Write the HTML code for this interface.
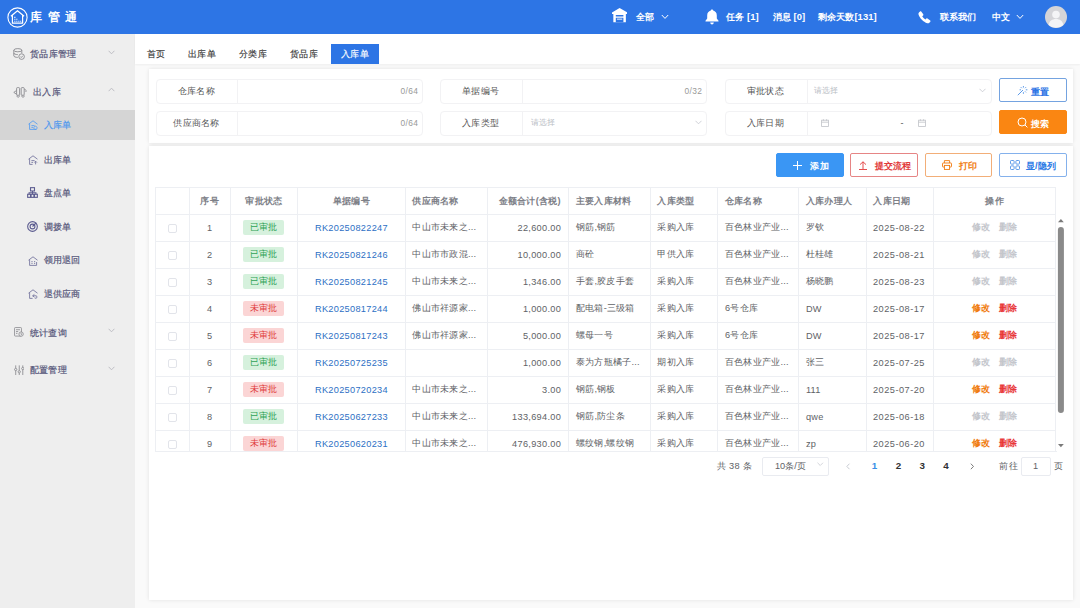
<!DOCTYPE html>
<html lang="zh">
<head>
<meta charset="utf-8">
<title>库管通</title>
<style>
*{box-sizing:border-box;margin:0;padding:0}
html,body{width:1080px;height:608px;overflow:hidden}
body{font-family:"Liberation Sans",sans-serif;font-size:9.2px;letter-spacing:.26px;color:#606266;background:#fafafa;position:relative}
.abs{position:absolute}
#hdr{position:absolute;left:0;top:0;width:1080px;height:34px;background:#2d75e5;color:#fff}
#hdr .t{position:absolute;top:0;height:34px;line-height:34px;font-size:9.4px;letter-spacing:.1px;font-weight:bold;white-space:nowrap}
#brand{position:absolute;left:30.300px;top:-.5px;height:34px;line-height:34px;font-size:12px;letter-spacing:5.400px;font-weight:bold;white-space:nowrap}
#side{position:absolute;left:0;top:34px;width:135px;height:574px;background:#eeeeee}
.mi{position:absolute;left:0;width:135px;height:30px;line-height:30px;color:#56567a;font-size:9.2px;white-space:nowrap}
.mi.act{background:#d5d5d5;color:#4f98ee}
.mi span{position:absolute;top:0;-webkit-text-stroke:.2px currentColor}
.mi svg{position:absolute}
#tabs{position:absolute;left:135px;top:34px;width:945px;height:29.500px;background:#fff;box-shadow:0 1px 2px rgba(0,0,0,.05)}
.tab{position:absolute;top:10px;height:20px;line-height:20px;font-size:9.3px;color:#3a3a3a;-webkit-text-stroke:.15px currentColor;white-space:nowrap}
.tab.on{background:#2d75e5;color:#fff;text-align:center}
.panel{position:absolute;background:#fff;box-shadow:0 0 4px rgba(0,0,0,.10)}
.fg{position:absolute;height:25px;border:1px solid #f2f2f4;border-radius:4px;background:#fff}
.fg .lb{position:absolute;left:0;top:0;height:23px;line-height:23px;text-align:center;padding-right:1.2px;color:#555;font-size:9.3px;border-right:1px solid #f2f2f4}
.fg .cnt{position:absolute;right:4.2px;top:0;line-height:23.6px;font-size:8.4px;letter-spacing:.35px;color:#999}
.fg .ph{position:absolute;top:0;line-height:22px;font-size:7.6px;color:#b8bcc4}
.btn{position:absolute;width:67.5px;height:24px;line-height:22px;border-radius:2px;border:1px solid;font-size:9.2px;font-weight:bold;white-space:nowrap}
.btn span{position:absolute;top:1.5px}
.btn svg{position:absolute}
.btn.tb span{top:.8px}
table{border-collapse:collapse;table-layout:fixed;width:900.500px;font-size:9.2px}
td,th{height:27px;border:1px solid #edeff3;padding:0 0 0 6.7px;text-align:left;white-space:nowrap;overflow:hidden;font-weight:normal;color:#606266}
th{color:#7d8087;font-weight:bold;font-size:9.2px}
td{padding-bottom:0 !important}
th{padding-top:2px !important}
td.r,td.lk{letter-spacing:.3px}
td.d{letter-spacing:.5px;padding-left:6.3px}
.c{text-align:center;padding:0}
.r{text-align:right;padding:0 7.4px 0 0}
td.r{padding-right:7.1px}
.lk{color:#2d6fc4}
.tg{position:relative;left:-.4px;display:inline-block;height:15px;line-height:15px;padding:0 6.5px;border-radius:2px;font-size:9.2px}
.tg.g{background:#d6f1dd;color:#2fa256}
.tg.rd{background:#fbd5d5;color:#e03c3c}
.cb{display:inline-block;width:9px;height:9px;border:1px solid #e2e4ea;border-radius:2px;background:#fff;vertical-align:middle}
.op b{font-weight:bold;margin:0 4.3px}
.op.off b{color:#c4c6cc}
.op.on b:first-child{color:#f07c10}
.op.on b:last-child{color:#e8383a}
.pg{position:absolute;top:455px;height:22px;line-height:22px;font-size:9.2px;color:#606266;white-space:nowrap}
</style>
</head>
<body>
<div id="hdr">
  <svg class="abs" style="left:6.500px;top:6.500px" width="21" height="21" viewBox="0 0 21 21" fill="none" stroke="#fff">
    <circle cx="10.5" cy="10.5" r="9.600" stroke-width="1.1"/>
    <path d="M3.900 9.200 L10.500 3.700 L17.100 9.200 M5.400 8.300 V16.200 H15.600 V8.300" stroke-width="1.2" stroke-linejoin="round"/>
    <path d="M7.300 10.400h1.100M7.300 12.300h1.100M7.300 14.200h1.100M9.300 12.300h1.100M9.300 14.200h1.100M11.300 14.200h1.100M13.200 14.200h1" stroke-width="1.100"/>
  </svg>
  <div id="brand">库管通</div>
  <svg class="abs" style="left:612px;top:8.400px" width="15.200" height="14.300" viewBox="0 0 16 15"><path d="M8 0 L16 4.6 V6.2 H14.6 V15 H1.4 V6.2 H0 V4.6 Z" fill="#fff"/><path d="M4 7.4h8v1.6H4z M4 10.2h8v4.8H4z" fill="#2d75e5"/><path d="M5.2 11.2h5.6v1H5.2z" fill="#fff"/></svg>
  <div class="t" style="left:636px">全部</div>
  <svg class="abs" style="left:661px;top:14px" width="8" height="6" viewBox="0 0 8 6" fill="none" stroke="#fff" stroke-width="1"><path d="M0.8 1 L4 4.4 L7.2 1"/></svg>
  <svg class="abs" style="left:705px;top:9px" width="14" height="16" viewBox="0 0 14 16" fill="#fff"><path d="M7 0.5c.7 0 1.2.5 1.2 1.1 2.2.6 3.6 2.4 3.6 4.8v3.2l1.7 2.2v.8H.5v-.8l1.7-2.2V6.400c0-2.4 1.400-4.200 3.600-4.800C5.800 1 6.300.5 7 .5z"/><path d="M5.200 13.600h3.600c0 1-.8 1.800-1.800 1.800s-1.800-.8-1.800-1.800z"/></svg>
  <div class="t" style="left:726px">任务 [1]</div>
  <div class="t" style="left:772.5px">消息 [0]</div>
  <div class="t" style="left:818px">剩余天数[131]</div>
  <svg class="abs" style="left:918.300px;top:11px" width="13" height="12.500" viewBox="0 0 14 14" fill="#fff"><path d="M3.300.6 5.600 3.700c.3.400.2.900-.1 1.200L4.400 6c.8 1.500 2 2.700 3.600 3.600l1.100-1.100c.3-.3.800-.4 1.200-.1l3.100 2.300c.4.300.5.900.1 1.300l-1.100 1.200c-.6.600-1.500.8-2.300.5C5.700 12.200 1.800 8.300.3 3.900 0 3.100.2 2.200.8 1.600L2 .5c.4-.4 1-.3 1.300.1z"/></svg>
  <div class="t" style="left:940px">联系我们</div>
  <div class="t" style="left:991.5px">中文</div>
  <svg class="abs" style="left:1016px;top:14px" width="8" height="6" viewBox="0 0 8 6" fill="none" stroke="#fff" stroke-width="1"><path d="M0.8 1 L4 4.400 L7.200 1"/></svg>
  <svg class="abs" style="left:1044.500px;top:5.700px" width="22" height="22" viewBox="0 0 22 22"><circle cx="11" cy="11" r="11" fill="#d4d4d8"/><circle cx="11" cy="8.600" r="3.800" fill="#f4f4f6"/><path d="M3.600 19c.6-4 3.600-6 7.400-6s6.800 2 7.400 6a11 11 0 0 1-14.800 0z" fill="#f4f4f6"/></svg>
</div>

<div id="side">
  <div class="mi" style="top:5px"><svg style="left:13px;top:9px" width="12" height="12" viewBox="0 0 12 12" fill="none" stroke="#8a8a8f" stroke-width=".9"><ellipse cx="4.800" cy="2.200" rx="4" ry="1.600"/><path d="M.8 2.200v5.600c0 .9 1.800 1.600 4 1.600M.8 5c0 .9 1.800 1.600 4 1.600M8.800 2.200v3"/><circle cx="8.600" cy="8.600" r="2.800"/><path d="M7.400 8.600l.9.900 1.500-1.700"/></svg><span style="left:30px">货品库管理</span><svg style="left:108.300px;top:10.500px" width="7" height="5" viewBox="0 0 7 5" fill="none" stroke="#b9b9c0" stroke-width=".9"><path d="M.6.8 3.500 3.800 6.400.8"/></svg></div>
  <div class="mi" style="top:43px"><svg style="left:13px;top:10px" width="14" height="11" viewBox="0 0 14 11" fill="none" stroke="#8a8a8f" stroke-width=".9"><rect x="3.600" y=".6" width="3" height="7.600" rx=".8"/><rect x="8.200" y=".6" width="3" height="7.600" rx=".8"/><path d="M3.400 3.600.8 5.400l2.600 1.800M11.400 2.200c1.600.2 2 1.600 1.400 2.800M4.200 8.200v1.400c0 .8 2 .8 2 0V8.200M9 8.200v1.400c0 .8 2 .8 2 0V8.200"/></svg><span style="left:33px">出入库</span><svg style="left:108.300px;top:10.300px" width="7" height="5" viewBox="0 0 7 5" fill="none" stroke="#b9b9c0" stroke-width=".9"><path d="M.6 4.200 3.500 1.200 6.400 4.200"/></svg></div>
  <div class="mi act" style="top:75.500px"><svg style="left:28px;top:10.500px" width="10" height="10" viewBox="0 0 10 10" fill="none" stroke="#5a9ff0" stroke-width=".9"><path d="M.5 4.200 5 .8l4.500 3.400M1.600 3.600v5.800M1.600 9.400h7M3.400 5.600h3.200M3.400 7.400h1.600M7.400 6.200a1.600 1.600 0 1 0 .1 0z"/></svg><span style="left:43.700px">入库单</span></div>
  <div class="mi" style="top:110.600px"><svg style="left:28px;top:10.500px" width="10" height="10" viewBox="0 0 10 10" fill="none" stroke="#7878a0" stroke-width=".9"><path d="M.5 4.200 5 .8l4.500 3.400M1.600 3.600v5.800M1.600 9.400h3M3.400 5.600h3.200M3.400 7.400h1.600M7.600 9.400V6.200M6.200 7.600l1.400-1.400L9 7.600"/></svg><span style="left:43.700px">出库单</span></div>
  <div class="mi" style="top:143.700px"><svg style="left:27.200px;top:9.300px" width="11" height="11" viewBox="0 0 10 10" fill="none" stroke="#5c5c90" stroke-width="1"><rect x="3.200" y=".6" width="3.600" height="3" /><rect x=".6" y="6.600" width="2.600" height="2.800"/><rect x="3.700" y="6.600" width="2.600" height="2.800"/><rect x="6.800" y="6.600" width="2.600" height="2.800"/><path d="M5 3.600v3M1.900 6.600V5.200h6.200v1.400"/></svg><span style="left:43.700px">盘点单</span></div>
  <div class="mi" style="top:178.100px"><svg style="left:27.200px;top:9.300px" width="11" height="11" viewBox="0 0 10 10" fill="none" stroke="#5c5c90" stroke-width="1"><circle cx="5" cy="5" r="4.400"/><circle cx="5" cy="5" r="2.200"/><path d="M5 5 8.400 1.600"/></svg><span style="left:43.700px">调拨单</span></div>
  <div class="mi" style="top:211.100px"><svg style="left:28px;top:10.500px" width="10" height="10" viewBox="0 0 10 10" fill="none" stroke="#7878a0" stroke-width=".9"><path d="M.5 4.200 5 .8l4.500 3.400M1.600 3.600v5.800M1.600 9.400h7V6M3.400 5.600h1.200M3.400 7.400h1.200M6 5.600h1.200M6 7.400h1.200"/></svg><span style="left:43.700px">领用退回</span></div>
  <div class="mi" style="top:244.800px"><svg style="left:28px;top:10.500px" width="10" height="10" viewBox="0 0 10 10" fill="none" stroke="#7878a0" stroke-width=".9"><path d="M.5 4.200 5 .8l4.500 3.400M1.600 3.600v5.800h3M6.400 5.400 4.600 6.800l1.800 1.400M4.800 6.800h3.400c1 0 1 2.400 0 2.400H6.800"/></svg><span style="left:43.700px">退供应商</span></div>
  <div class="mi" style="top:283.500px"><svg style="left:14px;top:9.800px" width="10" height="10" viewBox="0 0 11 11" fill="none" stroke="#8a8a8f" stroke-width=".9"><rect x=".6" y=".6" width="7.600" height="9.400" rx=".8"/><path d="M2.200 3h4.400M2.200 5h2.400M2.200 7h1.600"/><circle cx="7.800" cy="7.800" r="2.400" fill="#eee"/><path d="M7.800 6.600v1.400l.9.600"/></svg><span style="left:29.800px">统计查询</span><svg style="left:108.300px;top:10.500px" width="7" height="5" viewBox="0 0 7 5" fill="none" stroke="#b9b9c0" stroke-width=".9"><path d="M.6.8 3.500 3.800 6.400.8"/></svg></div>
  <div class="mi" style="top:321.200px"><svg style="left:13.500px;top:9.500px" width="10.500" height="10.500" viewBox="0 0 11 11" fill="none" stroke="#8a8a8f" stroke-width=".9"><path d="M1.800.4v3M1.800 6v4.600M5.500.4v5.400M5.500 8.400v2.200M9.200.4v2M9.200 5v5.600"/><circle cx="1.800" cy="4.700" r="1.200"/><circle cx="5.500" cy="7.100" r="1.200"/><circle cx="9.200" cy="3.700" r="1.200"/></svg><span style="left:29.800px">配置管理</span><svg style="left:108.300px;top:10.500px" width="7" height="5" viewBox="0 0 7 5" fill="none" stroke="#b9b9c0" stroke-width=".9"><path d="M.6.8 3.500 3.800 6.400.8"/></svg></div>
</div>

<div id="tabs">
  <div class="tab" style="left:11.500px">首页</div>
  <div class="tab" style="left:53px">出库单</div>
  <div class="tab" style="left:104px">分类库</div>
  <div class="tab" style="left:155px">货品库</div>
  <div class="tab on" style="left:196px;width:48px">入库单</div>
</div>

<div class="panel" id="filter" style="left:148.500px;top:68.500px;width:924.300px;height:74.500px"></div>
<div class="fg" style="left:156px;top:78.500px;width:267.400px"><div class="lb" style="width:81px">仓库名称</div><div class="cnt">0/64</div></div>
<div class="fg" style="left:156px;top:110.500px;width:267.400px"><div class="lb" style="width:81px">供应商名称</div><div class="cnt">0/64</div></div>
<div class="fg" style="left:440px;top:78.500px;width:267.400px"><div class="lb" style="width:81.500px">单据编号</div><div class="cnt">0/32</div></div>
<div class="fg" style="left:440px;top:110.500px;width:267.400px"><div class="lb" style="width:81.500px">入库类型</div><div class="ph" style="left:89.500px">请选择</div><svg class="abs" style="right:4.500px;top:8.500px" width="7" height="5" viewBox="0 0 7 5" fill="none" stroke="#c4c7ce" stroke-width=".8"><path d="M.5.8 3.500 3.800 6.500.8"/></svg></div>
<div class="fg" style="left:724.500px;top:78.500px;width:267px"><div class="lb" style="width:82px">审批状态</div><div class="ph" style="left:88px">请选择</div><svg class="abs" style="right:4.500px;top:8.500px" width="7" height="5" viewBox="0 0 7 5" fill="none" stroke="#c4c7ce" stroke-width=".8"><path d="M.5.8 3.500 3.800 6.500.8"/></svg></div>
<div class="fg" style="left:724.500px;top:110.500px;width:267px"><div class="lb" style="width:82px">入库日期</div>
  <svg class="abs" style="left:95.300px;top:7.200px" width="8" height="8" viewBox="0 0 8 8" fill="none" stroke="#c0c2c8" stroke-width=".8"><rect x=".6" y="1.200" width="6.800" height="6.200"/><path d="M.6 3.200h6.800M2.400.2v1.600M5.600.2v1.600"/></svg>
  <div class="abs" style="left:175px;top:0;line-height:23px;font-size:9px;color:#555">-</div>
  <svg class="abs" style="left:192.800px;top:7.200px" width="8" height="8" viewBox="0 0 8 8" fill="none" stroke="#c0c2c8" stroke-width=".8"><rect x=".6" y="1.200" width="6.800" height="6.200"/><path d="M.6 3.200h6.800M2.400.2v1.600M5.600.2v1.600"/></svg>
</div>
<div class="btn" style="left:999.200px;top:78.300px;border-color:#74a3e0;background:#fff;color:#2d75e5">
  <svg style="left:16.500px;top:6px" width="11" height="11" viewBox="0 0 11 11" fill="none" stroke="#4a8ee6" stroke-width=".9"><path d="M.8 10.200 6 5M6.400 1v1.600M6.400 7.200v1.600M2.600 4.800h1.400M8.800 4.800h1.600M3.800 2.200l1 1M9 2.200l-1 1M9 7.400l-1-1"/></svg>
  <span style="left:31px">重置</span></div>
<div class="btn" style="left:999.200px;top:110px;border-color:#fa8612;background:#fa8612;color:#fff">
  <svg style="left:16.500px;top:5.500px" width="11" height="11" viewBox="0 0 11 11" fill="none" stroke="#fff" stroke-width="1"><circle cx="5" cy="5" r="4"/><path d="M8 8l2.400 2.400"/></svg>
  <span style="left:31px">搜索</span></div>

<div class="panel" id="main" style="left:148.500px;top:146px;width:924.300px;height:454.300px"></div>
<div class="btn tb" style="left:776.300px;top:153.100px;border-color:#3a96f4;background:#3a96f4;color:#fff">
  <svg style="left:16px;top:6.500px" width="9" height="9" viewBox="0 0 9 9" fill="none" stroke="#fff" stroke-width="1"><path d="M4.500 0v9M0 4.500h9"/></svg>
  <span style="left:33px">添加</span></div>
<div class="btn tb" style="left:850.200px;top:153.100px;border-color:#e68585;background:#fff;color:#e23a3a">
  <svg style="left:8px;top:6.500px" width="8" height="9" viewBox="0 0 8 9" fill="none" stroke="#e23a3a" stroke-width=".9"><path d="M4 8V.8M1 3.600 4 .8l3 2.800M0 8.500h8"/></svg>
  <span style="left:23.500px">提交流程</span></div>
<div class="btn tb" style="left:924.500px;top:153.100px;border-color:#f2ae78;background:#fff;color:#f07c10">
  <svg style="left:16.500px;top:6px" width="10" height="10" viewBox="0 0 10 10" fill="none" stroke="#f07c10" stroke-width=".9"><path d="M2.400 3V.6h5.200V3M2.400 7H1C.7 7 .5 6.800.5 6.500V3.500C.5 3.200.7 3 1 3h8c.3 0 .5.200.5.500v3c0 .300-.2.500-.5.500H7.600"/><rect x="2.400" y="5.400" width="5.200" height="4"/></svg>
  <span style="left:33px">打印</span></div>
<div class="btn tb" style="left:999.200px;top:153.100px;border-color:#84b1ec;background:#fff;color:#2d7be5">
  <svg style="left:9.500px;top:6px" width="10" height="10" viewBox="0 0 10 10" fill="none" stroke="#4a8ee6" stroke-width=".9"><rect x=".5" y=".5" width="3.600" height="3.600" rx=".8"/><rect x="5.900" y=".5" width="3.600" height="3.600" rx=".8"/><rect x=".5" y="5.900" width="3.600" height="3.600" rx=".8"/><rect x="5.900" y="5.900" width="3.600" height="3.600" rx=".8"/></svg>
  <span style="left:25.500px">显/隐列</span></div>
<div class="abs" id="tw" style="left:154.700px;top:186.500px;width:902px;height:265.500px;overflow:hidden;border-bottom:1px solid #edeff3">
<table>
<colgroup><col style="width:34px"><col style="width:41px"><col style="width:67.5px"><col style="width:107.5px"><col style="width:82px"><col style="width:81.5px"><col style="width:81.5px"><col style="width:67.5px"><col style="width:81px"><col style="width:67.5px"><col style="width:67.5px"><col style="width:122px"></colgroup>
<tr><th></th><th class="c">序号</th><th class="c">审批状态</th><th class="c">单据编号</th><th>供应商名称</th><th class="r">金额合计(含税)</th><th>主要入库材料</th><th>入库类型</th><th>仓库名称</th><th>入库办理人</th><th>入库日期</th><th class="c">操作</th></tr>
<tr><td class="c"><i class="cb"></i></td><td class="c">1</td><td class="c"><span class="tg g">已审批</span></td><td class="c lk">RK20250822247</td><td>中山市未来之...</td><td class="r">22,600.00</td><td>钢筋,钢筋</td><td>采购入库</td><td>百色林业产业...</td><td>罗钦</td><td class="d">2025-08-22</td><td class="c op off"><b>修改</b><b>删除</b></td></tr>
<tr><td class="c"><i class="cb"></i></td><td class="c">2</td><td class="c"><span class="tg g">已审批</span></td><td class="c lk">RK20250821246</td><td>中山市市政混...</td><td class="r">10,000.00</td><td>商砼</td><td>甲供入库</td><td>百色林业产业...</td><td>杜桂雄</td><td class="d">2025-08-21</td><td class="c op off"><b>修改</b><b>删除</b></td></tr>
<tr><td class="c"><i class="cb"></i></td><td class="c">3</td><td class="c"><span class="tg g">已审批</span></td><td class="c lk">RK20250821245</td><td>中山市未来之...</td><td class="r">1,346.00</td><td>手套,胶皮手套</td><td>采购入库</td><td>百色林业产业...</td><td>杨晓鹏</td><td class="d">2025-08-23</td><td class="c op off"><b>修改</b><b>删除</b></td></tr>
<tr><td class="c"><i class="cb"></i></td><td class="c">4</td><td class="c"><span class="tg rd">未审批</span></td><td class="c lk">RK20250817244</td><td>佛山市祥源家...</td><td class="r">1,000.00</td><td>配电箱-三级箱</td><td>采购入库</td><td>6号仓库</td><td>DW</td><td class="d">2025-08-17</td><td class="c op on"><b>修改</b><b>删除</b></td></tr>
<tr><td class="c"><i class="cb"></i></td><td class="c">5</td><td class="c"><span class="tg rd">未审批</span></td><td class="c lk">RK20250817243</td><td>佛山市祥源家...</td><td class="r">5,000.00</td><td>螺母一号</td><td>采购入库</td><td>6号仓库</td><td>DW</td><td class="d">2025-08-17</td><td class="c op on"><b>修改</b><b>删除</b></td></tr>
<tr><td class="c"><i class="cb"></i></td><td class="c">6</td><td class="c"><span class="tg g">已审批</span></td><td class="c lk">RK20250725235</td><td></td><td class="r">1,000.00</td><td>泰为方瓶橘子...</td><td>期初入库</td><td>百色林业产业...</td><td>张三</td><td class="d">2025-07-25</td><td class="c op off"><b>修改</b><b>删除</b></td></tr>
<tr><td class="c"><i class="cb"></i></td><td class="c">7</td><td class="c"><span class="tg rd">未审批</span></td><td class="c lk">RK20250720234</td><td>中山市未来之...</td><td class="r">3.00</td><td>钢筋,钢板</td><td>采购入库</td><td>百色林业产业...</td><td>111</td><td class="d">2025-07-20</td><td class="c op on"><b>修改</b><b>删除</b></td></tr>
<tr><td class="c"><i class="cb"></i></td><td class="c">8</td><td class="c"><span class="tg g">已审批</span></td><td class="c lk">RK20250627233</td><td>中山市未来之...</td><td class="r">133,694.00</td><td>钢筋,防尘条</td><td>采购入库</td><td>百色林业产业...</td><td>qwe</td><td class="d">2025-06-18</td><td class="c op off"><b>修改</b><b>删除</b></td></tr>
<tr><td class="c"><i class="cb"></i></td><td class="c">9</td><td class="c"><span class="tg rd">未审批</span></td><td class="c lk">RK20250620231</td><td>中山市未来之...</td><td class="r">476,930.00</td><td>螺纹钢,螺纹钢</td><td>采购入库</td><td>百色林业产业...</td><td>zp</td><td class="d">2025-06-20</td><td class="c op on"><b>修改</b><b>删除</b></td></tr>
</table>
</div>
<svg class="abs" style="left:1056px;top:215px" width="10" height="236" viewBox="0 0 10 236">
  <path d="M4.900 4 L7.800 7.200 H2 Z" fill="#7a7a7a"/>
  <rect x="1.900" y="12" width="6" height="186" rx="3" fill="#8a8a8a"/>
  <path d="M4.900 232.300 L7.800 229 H2 Z" fill="#7a7a7a"/>
</svg>
<div class="pg" style="left:717px">共 38 条</div>
<div class="abs" style="left:761.500px;top:457px;width:67.300px;height:19px;border:1px solid #e9ebf0;border-radius:2px;background:#fff"></div>
<div class="pg" style="left:775px;letter-spacing:0">10条/页</div>
<svg class="abs" style="left:817.300px;top:462px" width="6.500" height="4.600" viewBox="0 0 7 5" fill="none" stroke="#c4c7ce" stroke-width=".8"><path d="M.5.8 3.500 3.800 6.500.8"/></svg>
<svg class="abs" style="left:846.300px;top:463px" width="4.300" height="6.900" viewBox="0 0 5 8" fill="none" stroke="#c0c4cc" stroke-width="1"><path d="M4 .8 1 4l3 3.200"/></svg>
<div class="pg" style="left:864.500px;width:20px;text-align:center;font-weight:bold;font-size:9.800px;color:#3a8ee6">1</div>
<div class="pg" style="left:888.500px;width:20px;text-align:center;font-weight:bold;font-size:9.800px;color:#303133">2</div>
<div class="pg" style="left:912.300px;width:20px;text-align:center;font-weight:bold;font-size:9.800px;color:#303133">3</div>
<div class="pg" style="left:936px;width:20px;text-align:center;font-weight:bold;font-size:9.800px;color:#303133">4</div>
<svg class="abs" style="left:970.300px;top:463px" width="4.300" height="6.900" viewBox="0 0 5 8" fill="none" stroke="#555" stroke-width=".9"><path d="M1 .8 4 4 1 7.200"/></svg>
<div class="pg" style="left:999.300px">前往</div>
<div class="abs" style="left:1020.700px;top:457px;width:30px;height:19px;border:1px solid #e9ebf0;border-radius:2px;background:#fff"></div>
<div class="pg" style="left:1020.700px;width:30px;text-align:center">1</div>
<div class="pg" style="left:1054px">页</div>
</body>
</html>
